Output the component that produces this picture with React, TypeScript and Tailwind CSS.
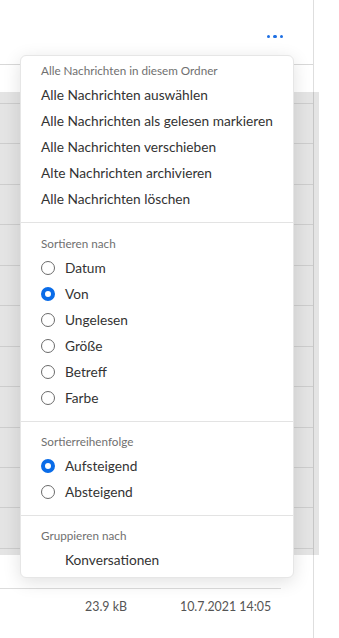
const font = { fontFamily: 'Lato, "Noto Sans", sans-serif' };

function Radio({ checked }: { checked?: boolean }) {
  return checked ? (
    <span className="w-[14px] h-[14px] rounded-full border-[4px] border-[#0a6ce8] bg-white shrink-0" />
  ) : (
    <span className="w-[14px] h-[14px] rounded-full border border-[#6b6b6b] bg-white shrink-0" />
  );
}

function SectionLabel({ children }: { children: string }) {
  return <div className="h-[22px] flex items-center px-5 text-[11.7px] text-[#707070] whitespace-nowrap">{children}</div>;
}

function Item({ children }: { children: string }) {
  return <div className="h-[26px] flex items-center px-5 text-[13.7px] text-[#333] whitespace-nowrap">{children}</div>;
}

function RadioItem({ label, checked }: { label: string; checked?: boolean }) {
  return (
    <div className="h-[26px] flex items-center gap-[10px] px-5 text-[13.7px] text-[#333] whitespace-nowrap">
      <Radio checked={checked} />
      <span>{label}</span>
    </div>
  );
}

export default function App() {
  const rows = Array.from({ length: 11 });

  return (
    <div className="relative w-[339px] h-[638px] bg-white overflow-hidden flex" style={font}>
      {/* list column */}
      <div className="w-[314px] shrink-0 border-r border-[#dedede] flex flex-col">
        <div className="h-[65px] border-b border-[#d8d8d8] flex items-end justify-end pr-[30px] pb-[26px]">
          <div className="flex gap-[3px]">
            <span className="w-[3.5px] h-[3.5px] rounded-full bg-[#1d6fe3]" />
            <span className="w-[3.5px] h-[3.5px] rounded-full bg-[#1d6fe3]" />
            <span className="w-[3.5px] h-[3.5px] rounded-full bg-[#1d6fe3]" />
          </div>
        </div>
        <div className="h-[27px]" />
        <div className="h-[463px] -mr-[6px] bg-black/[0.105] pt-[11px]">
          <div className="border-t border-[#cdcdcd] mr-[6px]">
            {rows.map((_, i) => (
              <div key={i} className="h-[40.45px] border-b border-[#cdcdcd]" />
            ))}
          </div>
        </div>
        <div className="h-[34px] border-b border-[#dcdcdc] mr-[32px]" />
        <div className="h-[36px] flex items-center text-[12.4px] text-[#555] whitespace-nowrap">
          <span className="w-[127px] text-right">23.9 kB</span>
          <span className="ml-[53px]">10.7.2021 14:05</span>
        </div>
      </div>

      {/* dropdown menu */}
      <div className="absolute left-[20px] top-[55px] w-[274px] bg-white rounded-[6px] border border-[#e6e6e6] shadow-[0_4px_18px_rgba(0,0,0,0.12)] flex flex-col">
        <div className="pt-[4px] pb-[10px] border-b border-[#e3e3e3]">
          <SectionLabel>Alle Nachrichten in diesem Ordner</SectionLabel>
          <Item>Alle Nachrichten auswählen</Item>
          <Item>Alle Nachrichten als gelesen markieren</Item>
          <Item>Alle Nachrichten verschieben</Item>
          <Item>Alte Nachrichten archivieren</Item>
          <Item>Alle Nachrichten löschen</Item>
        </div>
        <div className="pt-[10px] pb-[10px] border-b border-[#e3e3e3]">
          <SectionLabel>Sortieren nach</SectionLabel>
          <RadioItem label="Datum" />
          <RadioItem label="Von" checked />
          <RadioItem label="Ungelesen" />
          <RadioItem label="Größe" />
          <RadioItem label="Betreff" />
          <RadioItem label="Farbe" />
        </div>
        <div className="pt-[9px] pb-[10px] border-b border-[#e3e3e3]">
          <SectionLabel>Sortierreihenfolge</SectionLabel>
          <RadioItem label="Aufsteigend" checked />
          <RadioItem label="Absteigend" />
        </div>
        <div className="pt-[9px] pb-[4px]">
          <SectionLabel>Gruppieren nach</SectionLabel>
          <div className="h-[26px] flex items-center pl-[44px] text-[13.7px] text-[#333] whitespace-nowrap">Konversationen</div>
        </div>
      </div>
    </div>
  );
}
